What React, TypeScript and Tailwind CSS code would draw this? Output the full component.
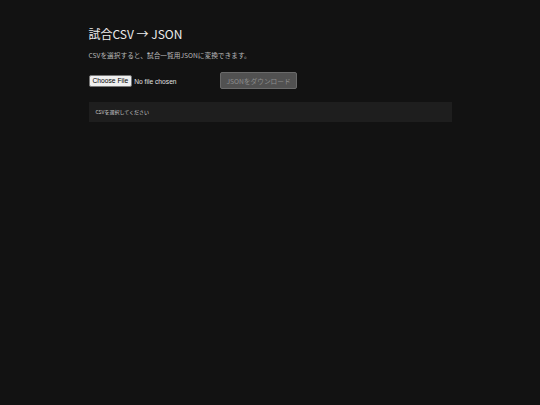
import React from "react";

export default function App() {
  return (
    <div
      className="min-h-[405px] w-full bg-[#121212] text-[#e6e6e6]"
      style={{ fontFamily: '"Noto Sans CJK JP", "Noto Sans", sans-serif' }}
    >
      <div className="mx-auto w-[363px] pt-[24px]">
        <h1 className="text-[12px] leading-[20px] font-normal text-[#ececec]">試合CSV → JSON</h1>
        <p className="mt-[6px] text-[6.7px] leading-[10px] text-[#b9b9b9]">
          CSVを選択すると、試合一覧用JSONに変換できます。
        </p>
        <div className="mt-[12px] flex h-[17px] items-center">
          <input
            type="file"
            accept=".csv"
            className="w-[131.5px] text-[6.7px] leading-[9px] text-[#e0e0e0] [font-family:'Liberation_Sans',Arial,sans-serif] file:mr-[2px] file:rounded-[2px] file:border file:border-[#767676] file:bg-[#efefef] file:px-[3px] file:py-[0.5px] file:text-black"
          />
          <button
            disabled
            className="h-[17px] rounded-[2px] border border-[#6a6a6a] bg-[#515151] px-[5.5px] text-[6.7px] leading-[10px] text-[#8e8e8e]"
          >
            JSONをダウンロード
          </button>
        </div>
        <div className="mt-[13px] flex h-[20px] items-center bg-[#1e1e1e] px-[7px]">
          <span className="text-[5px] leading-[8px] text-[#cfcfcf]">CSVを選択してください</span>
        </div>
      </div>
    </div>
  );
}
